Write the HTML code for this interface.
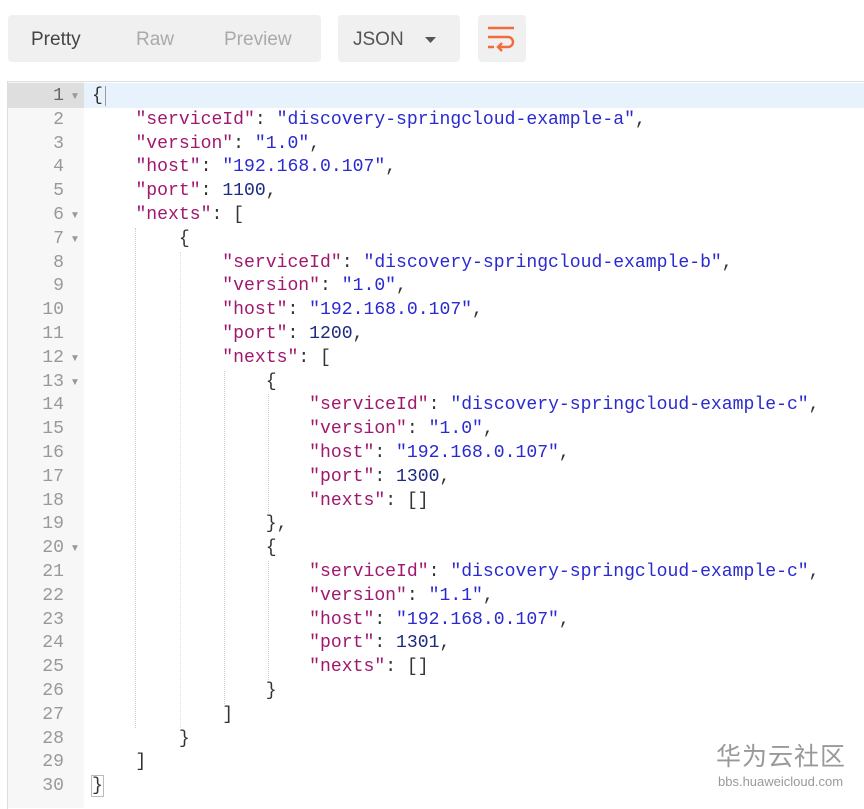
<!DOCTYPE html>
<html><head><meta charset="utf-8"><style>
body{margin:0;width:864px;height:808px;background:#fff;position:relative;overflow:hidden;font-family:"Liberation Sans",sans-serif}
.box{position:absolute;background:#f0f0f0;border-radius:4px}
.tb{position:absolute;font-size:19px;top:29px}
#ed{position:absolute;left:7px;top:81px;width:857px;height:727px;border-top:1px solid #ddd;border-left:1px solid #ddd}
#gut{position:absolute;left:8px;top:82px;width:76px;height:726px;background:#f7f7f7}
.hl{position:absolute;left:84px;top:83px;width:780px;height:25px;background:#e8f2fc}
.hlg{position:absolute;left:8px;top:83px;width:76px;height:25px;background:#dedede}
.ln{position:absolute;left:8px;width:56px;text-align:right;font:18.1px "Liberation Mono",monospace;color:#999;line-height:23.8px}
.ar{position:absolute;left:70px;font-size:10px;color:#999;line-height:23.8px}
.c{position:absolute;left:92px;font:18.1px "Liberation Mono",monospace;color:#333;line-height:23.8px;white-space:pre}
.k{color:#a0186d}.s{color:#2a2ad0}.n{color:#1c2a80}
.g{position:absolute;width:0;border-left:1px dotted #ccc}
</style></head><body>
<div class="box" style="left:8px;top:15px;width:313px;height:47px"></div>
<div class="tb" style="left:31px;color:#444">Pretty</div>
<div class="tb" style="left:136px;color:#aaa">Raw</div>
<div class="tb" style="left:224px;color:#aaa">Preview</div>
<div class="box" style="left:338px;top:15px;width:122px;height:47px"></div>
<div class="tb" style="left:353px;color:#555">JSON</div>
<svg style="position:absolute;left:424px;top:36px" width="13" height="8"><path d="M1 1h11l-5.5 6z" fill="#555"/></svg>
<div class="box" style="left:478px;top:15px;width:48px;height:47px"></div>
<svg style="position:absolute;left:486px;top:25px" width="32" height="28" fill="none" stroke="#f26b3a" stroke-width="2.4">
<path d="M2 3h26M2 12h20a5 5 0 0 1 0 10h-9M16 18l-4 4 4 4M2 22h6"/></svg>
<div id="ed"></div><div id="gut"></div><div class="hl"></div><div class="hlg"></div>
<div class="g" style="left:135px;top:228px;height:500px"></div>
<div class="g" style="left:180px;top:252px;height:476px;border-color:#ddd"></div>
<div class="g" style="left:224px;top:371px;height:333px"></div>
<div class="g" style="left:268px;top:394px;height:119px"></div>
<div class="g" style="left:268px;top:561px;height:119px"></div>
<div style="position:absolute;top:85px;left:0;width:864px">
<div class="ln" style="top:0;color:#666">1</div><div class="ln" style="top:23.8px">2</div><div class="ln" style="top:47.6px">3</div><div class="ln" style="top:71.4px">4</div><div class="ln" style="top:95.2px">5</div><div class="ln" style="top:119px">6</div><div class="ln" style="top:142.8px">7</div><div class="ln" style="top:166.6px">8</div><div class="ln" style="top:190.4px">9</div><div class="ln" style="top:214.2px">10</div><div class="ln" style="top:238px">11</div><div class="ln" style="top:261.8px">12</div><div class="ln" style="top:285.6px">13</div><div class="ln" style="top:309.4px">14</div><div class="ln" style="top:333.2px">15</div><div class="ln" style="top:357px">16</div><div class="ln" style="top:380.8px">17</div><div class="ln" style="top:404.6px">18</div><div class="ln" style="top:428.4px">19</div><div class="ln" style="top:452.2px">20</div><div class="ln" style="top:476px">21</div><div class="ln" style="top:499.8px">22</div><div class="ln" style="top:523.6px">23</div><div class="ln" style="top:547.4px">24</div><div class="ln" style="top:571.2px">25</div><div class="ln" style="top:595px">26</div><div class="ln" style="top:618.8px">27</div><div class="ln" style="top:642.6px">28</div><div class="ln" style="top:666.4px">29</div><div class="ln" style="top:690.2px">30</div>
<div class="ar" style="top:0">▼</div><div class="ar" style="top:119px">▼</div><div class="ar" style="top:142.8px">▼</div><div class="ar" style="top:261.8px">▼</div><div class="ar" style="top:285.6px">▼</div><div class="ar" style="top:452.2px">▼</div>
<div class="c" style="top:0">{<span style="border-left:1px solid #999;margin-left:2px"></span></div>
<div class="c" style="top:23.8px">    <span class="k">"serviceId"</span>: <span class="s">"discovery-springcloud-example-a"</span>,</div>
<div class="c" style="top:47.6px">    <span class="k">"version"</span>: <span class="s">"1.0"</span>,</div>
<div class="c" style="top:71.4px">    <span class="k">"host"</span>: <span class="s">"192.168.0.107"</span>,</div>
<div class="c" style="top:95.2px">    <span class="k">"port"</span>: <span class="n">1100</span>,</div>
<div class="c" style="top:119px">    <span class="k">"nexts"</span>: [</div>
<div class="c" style="top:142.8px">        {</div>
<div class="c" style="top:166.6px">            <span class="k">"serviceId"</span>: <span class="s">"discovery-springcloud-example-b"</span>,</div>
<div class="c" style="top:190.4px">            <span class="k">"version"</span>: <span class="s">"1.0"</span>,</div>
<div class="c" style="top:214.2px">            <span class="k">"host"</span>: <span class="s">"192.168.0.107"</span>,</div>
<div class="c" style="top:238px">            <span class="k">"port"</span>: <span class="n">1200</span>,</div>
<div class="c" style="top:261.8px">            <span class="k">"nexts"</span>: [</div>
<div class="c" style="top:285.6px">                {</div>
<div class="c" style="top:309.4px">                    <span class="k">"serviceId"</span>: <span class="s">"discovery-springcloud-example-c"</span>,</div>
<div class="c" style="top:333.2px">                    <span class="k">"version"</span>: <span class="s">"1.0"</span>,</div>
<div class="c" style="top:357px">                    <span class="k">"host"</span>: <span class="s">"192.168.0.107"</span>,</div>
<div class="c" style="top:380.8px">                    <span class="k">"port"</span>: <span class="n">1300</span>,</div>
<div class="c" style="top:404.6px">                    <span class="k">"nexts"</span>: []</div>
<div class="c" style="top:428.4px">                },</div>
<div class="c" style="top:452.2px">                {</div>
<div class="c" style="top:476px">                    <span class="k">"serviceId"</span>: <span class="s">"discovery-springcloud-example-c"</span>,</div>
<div class="c" style="top:499.8px">                    <span class="k">"version"</span>: <span class="s">"1.1"</span>,</div>
<div class="c" style="top:523.6px">                    <span class="k">"host"</span>: <span class="s">"192.168.0.107"</span>,</div>
<div class="c" style="top:547.4px">                    <span class="k">"port"</span>: <span class="n">1301</span>,</div>
<div class="c" style="top:571.2px">                    <span class="k">"nexts"</span>: []</div>
<div class="c" style="top:595px">                }</div>
<div class="c" style="top:618.8px">            ]</div>
<div class="c" style="top:642.6px">        }</div>
<div class="c" style="top:666.4px">    ]</div>
<div class="c" style="top:690.2px"><span style="outline:1px solid #bbb">}</span></div>
</div>
<div style="position:absolute;left:716px;top:740px;font:25px/30px 'Noto Sans CJK SC',sans-serif;color:#999;letter-spacing:1px">华为云社区</div>
<div style="position:absolute;left:718px;top:774px;font:13px 'Liberation Sans',sans-serif;color:#999">bbs.huaweicloud.com</div>
</body></html>
